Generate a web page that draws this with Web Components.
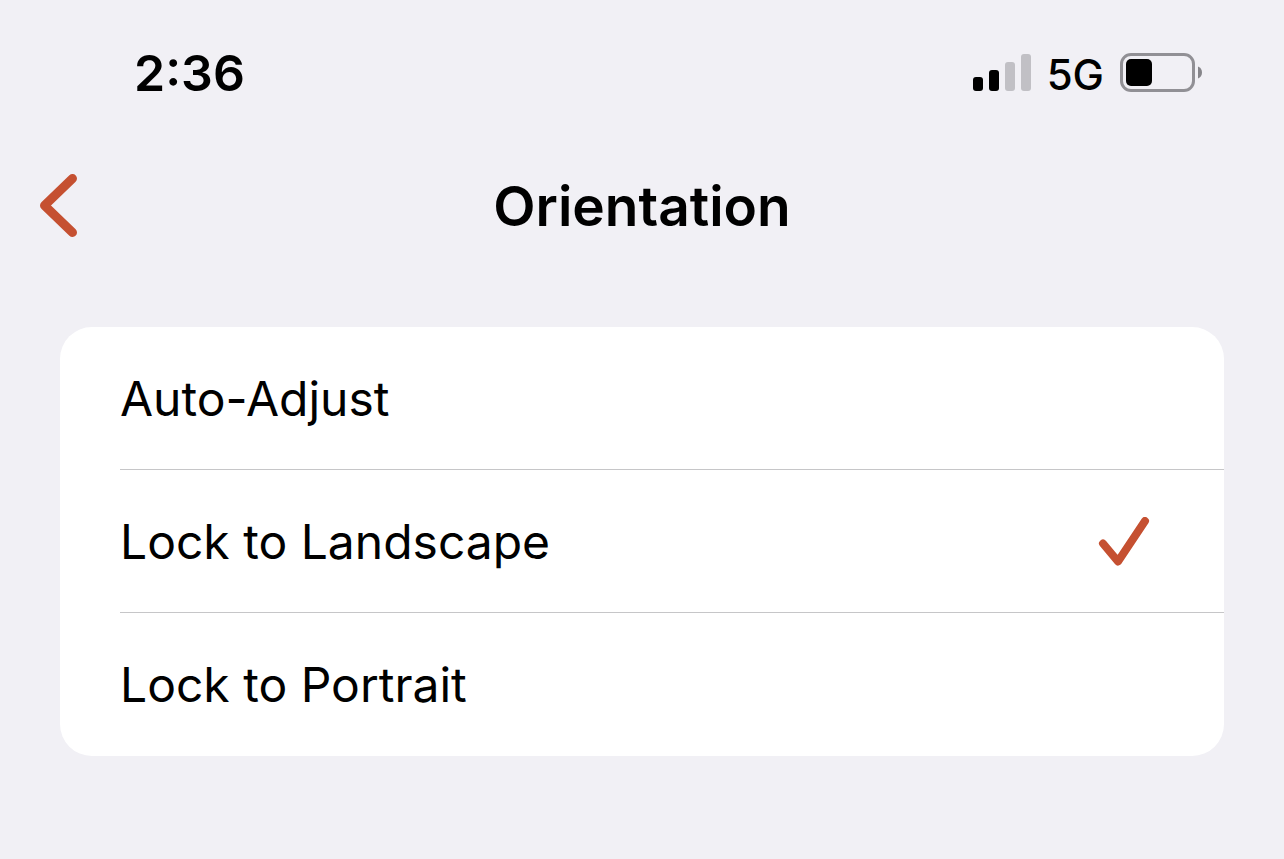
<!DOCTYPE html>
<html lang="en">
<head>
<meta charset="utf-8">
<meta name="viewport" content="width=device-width, initial-scale=1">
<title>Orientation</title>
<style>
    body {
        margin: 0;
        background: #f1f0f5;
        color: #000;
        font-family: Inter, "Liberation Sans", sans-serif;
        --accent: #c55031;
    }
</style>
</head>
<body>

<template id="status-bar">
    <style>
        :host {
            display: flex;
            align-items: center;
            justify-content: space-between;
            padding: 40px 80px 0 134px;
        }
        .time {
            font-size: 50px;
            font-weight: 600;
            line-height: 62px;
        }
        .indicators {
            display: flex;
            align-items: center;
            gap: 16px;
            font-size: 42px;
            font-weight: 500;
            line-height: 62px;
        }
        .network {
            padding-top: 4px;
        }
        svg {
            display: block;
        }
    </style>
    <span class="time"><slot></slot></span>
    <div class="indicators">
        <svg width="58" height="38" role="img" aria-label="Signal strength 2 of 4">
            <rect x="0" y="23" width="10" height="14" rx="3"/>
            <rect x="16" y="16" width="10" height="21" rx="3"/>
            <rect x="32" y="8" width="10" height="29" rx="3" fill="#c1c0c5"/>
            <rect x="48" y="0" width="10" height="37" rx="3" fill="#c1c0c5"/>
        </svg>
        <span class="network"><slot name="network"></slot></span>
        <svg width="84" height="40" role="img" aria-label="Battery">
            <rect x="1.5" y="1.5" width="72" height="36" rx="9.5" fill="none" stroke="#919095" stroke-width="3"/>
            <rect x="6" y="6" width="26" height="27" rx="5"/>
            <path d="M78 13.5c2.600 1 4 3.200 4 6s-1.400 5-4 6z" fill="#86858a"/>
        </svg>
    </div>
</template>

<template id="nav-header">
    <style>
        :host {
            display: grid;
            grid-template-columns: 1fr auto 1fr;
            align-items: center;
            padding: 65px 36px 0;
        }
        .back {
            justify-self: start;
            display: block;
            padding: 0 4px;
            border: 0;
            background: none;
            color: var(--accent);
            cursor: pointer;
        }
        svg {
            display: block;
        }
        h1 {
            margin: 0;
            font-size: 55px;
            font-weight: 600;
            line-height: 70px;
        }
    </style>
    <button class="back" type="button" aria-label="Back">
        <svg width="38" height="66" fill="none" stroke="currentColor" stroke-width="9" stroke-linecap="round" stroke-linejoin="round">
            <path d="M32.500 5.500L4.500 32.500L32.500 59.500"/>
        </svg>
    </button>
    <h1><slot></slot></h1>
</template>

<template id="option-list">
    <style>
        :host {
            display: block;
            margin: 86px 60px;
            border-radius: 32px;
            background: #fff;
            overflow: hidden;
        }
    </style>
    <slot></slot>
</template>

<template id="option-row">
    <style>
        :host {
            display: block;
            padding-left: 60px;
        }
        label {
            display: flex;
            align-items: center;
            justify-content: space-between;
            padding: 41px 74px 39px 0;
            border-bottom: 1px solid #c6c6c8;
            font-size: 48px;
            line-height: 62px;
            cursor: pointer;
        }
        :host(:last-of-type) label {
            border-bottom-color: transparent;
        }
        .mark {
            display: grid;
            color: var(--accent);
        }
        input, svg {
            grid-area: 1 / 1;
            width: 52px;
            height: 50px;
            margin: 0;
        }
        input {
            appearance: none;
            outline: none;
        }
        svg {
            visibility: hidden;
            pointer-events: none;
        }
        input:checked + svg {
            visibility: visible;
        }
        label:focus-within:has(:focus-visible) {
            background: #f1f0f5;
        }
    </style>
    <label>
        <span><slot></slot></span>
        <span class="mark">
            <input type="radio">
            <svg viewBox="0 0 52 50" fill="none" stroke="currentColor" stroke-width="8" stroke-linecap="round" stroke-linejoin="round">
                <path d="M5 26.500L20 44.500L47 4"/>
            </svg>
        </span>
    </label>
</template>

<status-bar>2:36<span slot="network">5G</span></status-bar>
<main>
    <nav-header>Orientation</nav-header>
    <option-list aria-label="Orientation">
        <option-row>Auto-Adjust</option-row>
        <option-row checked>Lock to Landscape</option-row>
        <option-row>Lock to Portrait</option-row>
    </option-list>
</main>

<script>
class TemplateElement extends HTMLElement {
    constructor() {
        super();
        const template = document.getElementById(this.localName);
        this.attachShadow({mode: 'open'}).appendChild(template.content.cloneNode(true));
    }
}

class StatusBar extends TemplateElement {}

class NavHeader extends TemplateElement {
    connectedCallback() {
        this.shadowRoot.querySelector('.back').onclick = () => history.back();
    }
}

class OptionRow extends TemplateElement {
    static get observedAttributes() {
        return ['checked'];
    }

    connectedCallback() {
        this.input = this.shadowRoot.querySelector('input');
        this.input.onchange = () => {
            this.dispatchEvent(new CustomEvent('option-select', {bubbles: true}));
        };
    }

    attributeChangedCallback() {
        this.shadowRoot.querySelector('input').checked = this.hasAttribute('checked');
    }
}

class OptionList extends TemplateElement {
    connectedCallback() {
        this.setAttribute('role', 'radiogroup');
        // radios in separate shadow roots don't group by name
        this.addEventListener('option-select', (event) => {
            for (const row of this.querySelectorAll('option-row')) {
                row.toggleAttribute('checked', row === event.target);
            }
        });
    }
}

customElements.define('status-bar', StatusBar);
customElements.define('nav-header', NavHeader);
customElements.define('option-row', OptionRow);
customElements.define('option-list', OptionList);
</script>
</body>
</html>
